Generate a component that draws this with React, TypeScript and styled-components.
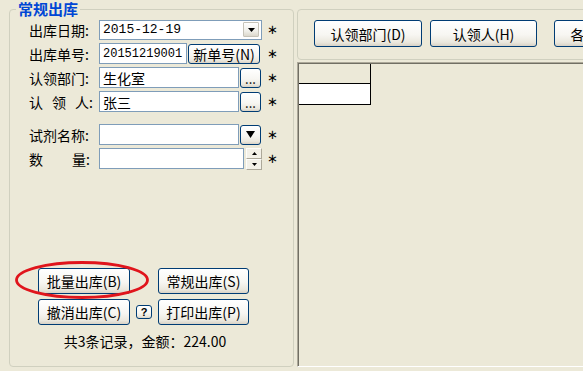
import React from 'react';
import styled, { createGlobalStyle } from 'styled-components';

const GlobalStyle = createGlobalStyle`
  html, body {
    margin: 0;
    padding: 0;
    background: #ece9d8;
  }
  body {
    width: 583px;
    height: 371px;
    overflow: hidden;
    font-family: "Noto Sans CJK SC", "Noto Sans", sans-serif;
    font-size: 14px;
    color: #000;
  }
`;

const Screen = styled.div`
  display: flex;
  gap: 3px;
  width: 583px;
  height: 371px;
  padding: 0 0 0 9px;
  box-sizing: border-box;
  overflow: hidden;
`;

/* ---------- left group box ---------- */

const Group = styled.fieldset`
  flex: 0 0 285px;
  height: 367px;
  margin: 0;
  padding: 0;
  min-width: 0;
  box-sizing: border-box;
  border: 1px solid #d0d0bf;
  border-radius: 4px;
  display: flex;
  flex-direction: column;
`;

const GroupTitle = styled.legend`
  margin-left: 6px;
  padding: 0 2px;
  font-size: 15px;
  line-height: 18px;
  font-weight: 700;
  color: #0046d5;
`;

const Form = styled.div`
  display: flex;
  flex-direction: column;
  gap: 3px;
  padding: 1px 0 0 19px;
`;

const Row = styled.div<{ $spaceBefore?: number }>`
  display: flex;
  align-items: center;
  height: 21px;
  margin-top: ${p => p.$spaceBefore ?? 0}px;
`;

const Label = styled.span`
  flex: none;
  width: 70px;
  font-size: 14px;
  line-height: 16px;
  white-space: nowrap;
`;

const Spread = styled.span<{ $gap: number }>`
  letter-spacing: ${p => p.$gap}px;
`;

const Field = styled.div`
  flex: none;
  display: flex;
  align-items: center;
  gap: 1px;
  width: 165px;
`;

const Star = styled.span`
  margin-left: 3px;
  font-family: "DejaVu Sans", sans-serif;
  font-size: 13px;
  line-height: 16px;
`;

const TextBox = styled.div<{ $width: number; $mono?: number }>`
  flex: none;
  width: ${p => p.$width}px;
  height: 21px;
  box-sizing: border-box;
  border: 1px solid #7f9db9;
  background: #fff;
  padding: 0 3px;
  display: flex;
  align-items: center;
  white-space: nowrap;
  overflow: hidden;
  font-family: ${p => (p.$mono ? '"Liberation Mono", monospace' : '"Noto Sans CJK SC", sans-serif')};
  font-size: ${p => p.$mono ?? 14}px;
  line-height: 16px;
`;

const Combo = styled(TextBox)`
  height: 20px;
  padding-right: 2px;
  justify-content: space-between;
`;

const DropButton = styled.span`
  width: 16px;
  height: 15px;
  box-sizing: border-box;
  border: 1px solid #c6c3b8;
  border-radius: 1px;
  background: linear-gradient(180deg, #ffffff 0%, #f1f0ea 60%, #dcd8cc 100%);
  display: flex;
  align-items: center;
  justify-content: center;
`;

const XpButton = styled.button<{ $width: number; $height: number }>`
  flex: none;
  width: ${p => p.$width}px;
  height: ${p => p.$height}px;
  padding: 0;
  box-sizing: border-box;
  border: 1px solid #003c74;
  border-radius: 3px;
  background: linear-gradient(180deg, #ffffff 0%, #f7f6f2 55%, #ebe8de 85%, #d8d2c6 100%);
  font-family: "Noto Sans CJK SC", sans-serif;
  font-size: 14px;
  line-height: 16px;
  color: #000;
  display: flex;
  align-items: center;
  justify-content: center;
  white-space: nowrap;
`;

const DotsButton = styled(XpButton)`
  align-items: flex-end;
  padding-bottom: 2px;
  font-size: 13px;
  line-height: 13px;
`;

const Spinner = styled.div`
  flex: none;
  margin-left: 1px;
  width: 16px;
  height: 22px;
  display: flex;
  flex-direction: column;
`;

const SpinHalf = styled.span`
  flex: 1;
  box-sizing: border-box;
  border: 1px solid;
  border-color: #fdfdfb #aca899 #aca899 #fdfdfb;
  background: #f3f1e8;
  display: flex;
  align-items: center;
  justify-content: center;
`;

/* ---------- bottom buttons ---------- */

const Actions = styled.div`
  margin-top: auto;
  padding: 0 0 17px 28px;
  display: flex;
  flex-direction: column;
  align-items: flex-start;
  gap: 8px;
`;

const ActionGrid = styled.div`
  position: relative;
  display: grid;
  grid-template-columns: 92px 28px 91px;
  grid-template-rows: 26px 26px;
  row-gap: 5px;
  align-items: center;
  justify-items: center;
`;

const HelpButton = styled(XpButton)`
  font-family: "Liberation Sans", sans-serif;
  font-weight: 700;
  font-size: 11px;
  line-height: 11px;
`;

const Circle = styled.svg`
  position: absolute;
  left: -23px;
  top: -7px;
  pointer-events: none;
`;

const Summary = styled.div`
  width: 214px;
  text-align: center;
  font-size: 14px;
  line-height: 16px;
`;

/* ---------- right side ---------- */

const RightSide = styled.div`
  flex: 1;
  min-width: 0;
  display: flex;
  flex-direction: column;
  gap: 2px;
  padding: 9px 0 4px;
  box-sizing: border-box;
  overflow: hidden;
`;

const Toolbar = styled.div`
  flex: none;
  width: 330px;
  height: 51px;
  box-sizing: border-box;
  border: 1px solid #d0d0bf;
  border-radius: 4px;
  padding: 10px 0 0 16px;
  display: flex;
  gap: 8px;
`;

const Grid = styled.div`
  flex: 1;
  box-sizing: border-box;
  border-top: 1px solid #aca899;
  border-left: 1px solid #aca899;
  border-bottom: 1px solid #ffffff;
  box-shadow: inset 1px 1px 0 #716f64;
  padding: 1px 0 0 1px;
`;

const Cell = styled.div<{ $filled?: boolean }>`
  width: 72px;
  height: ${p => (p.$filled ? 21 : 20)}px;
  box-sizing: border-box;
  border-right: 1px solid #000;
  border-bottom: 1px solid #000;
  background: ${p => (p.$filled ? '#fff' : 'transparent')};
`;

const Arrow = ({ w, h }: { w: number; h: number }) => (
  <svg width={w} height={h} viewBox={`0 0 ${w} ${h}`}>
    <polygon points={`0,0 ${w},0 ${w / 2},${h}`} fill="#000" />
  </svg>
);

const UpArrow = () => (
  <svg width="5" height="3" viewBox="0 0 5 3">
    <polygon points="0,3 5,3 2.5,0" fill="#000" />
  </svg>
);

export default function App() {
  return (
    <>
      <GlobalStyle />
      <Screen>
        <Group>
          <GroupTitle>常规出库</GroupTitle>
          <Form>
            <Row>
              <Label>出库日期:</Label>
              <Field>
                <Combo $width={163} $mono={13}>
                  2015-12-19
                  <DropButton>
                    <Arrow w={7} h={4} />
                  </DropButton>
                </Combo>
              </Field>
              <Star>∗</Star>
            </Row>
            <Row>
              <Label>出库单号:</Label>
              <Field>
                <TextBox $width={88} $mono={12}>20151219001</TextBox>
                <XpButton $width={72} $height={20}>新单号(N)</XpButton>
              </Field>
              <Star>∗</Star>
            </Row>
            <Row>
              <Label>认领部门:</Label>
              <Field>
                <TextBox $width={140}>生化室</TextBox>
                <DotsButton $width={21} $height={20}>...</DotsButton>
              </Field>
              <Star>∗</Star>
            </Row>
            <Row>
              <Label>
                <Spread $gap={9}>认领</Spread>人:
              </Label>
              <Field>
                <TextBox $width={140}>张三</TextBox>
                <DotsButton $width={21} $height={20}>...</DotsButton>
              </Field>
              <Star>∗</Star>
            </Row>
            <Row $spaceBefore={9}>
              <Label>试剂名称:</Label>
              <Field>
                <TextBox $width={140} />
                <XpButton $width={21} $height={20}>
                  <Arrow w={9} h={7} />
                </XpButton>
              </Field>
              <Star>∗</Star>
            </Row>
            <Row>
              <Label>
                <Spread $gap={29}>数</Spread>量:
              </Label>
              <Field>
                <TextBox $width={145} />
                <Spinner>
                  <SpinHalf>
                    <UpArrow />
                  </SpinHalf>
                  <SpinHalf>
                    <Arrow w={5} h={3} />
                  </SpinHalf>
                </Spinner>
              </Field>
              <Star>∗</Star>
            </Row>
          </Form>

          <Actions>
            <ActionGrid>
              <XpButton $width={92} $height={26}>批量出库(B)</XpButton>
              <span />
              <XpButton $width={91} $height={26}>常规出库(S)</XpButton>
              <XpButton $width={92} $height={26}>撤消出库(C)</XpButton>
              <HelpButton $width={16} $height={14}>?</HelpButton>
              <XpButton $width={91} $height={26}>打印出库(P)</XpButton>
              <Circle width="134" height="38" viewBox="0 0 134 38">
                <ellipse cx="67" cy="19" rx="65.5" ry="17.5" fill="none" stroke="#e0151c" strokeWidth="2.8" />
              </Circle>
            </ActionGrid>
            <Summary>共3条记录，金额：224.00</Summary>
          </Actions>
        </Group>

        <RightSide>
          <Toolbar>
            <XpButton $width={108} $height={27}>认领部门(D)</XpButton>
            <XpButton $width={107} $height={27}>认领人(H)</XpButton>
            <XpButton $width={108} $height={27} style={{ marginLeft: 9 }}>各组统计(G)</XpButton>
          </Toolbar>
          <Grid>
            <Cell />
            <Cell $filled />
          </Grid>
        </RightSide>
      </Screen>
    </>
  );
}
